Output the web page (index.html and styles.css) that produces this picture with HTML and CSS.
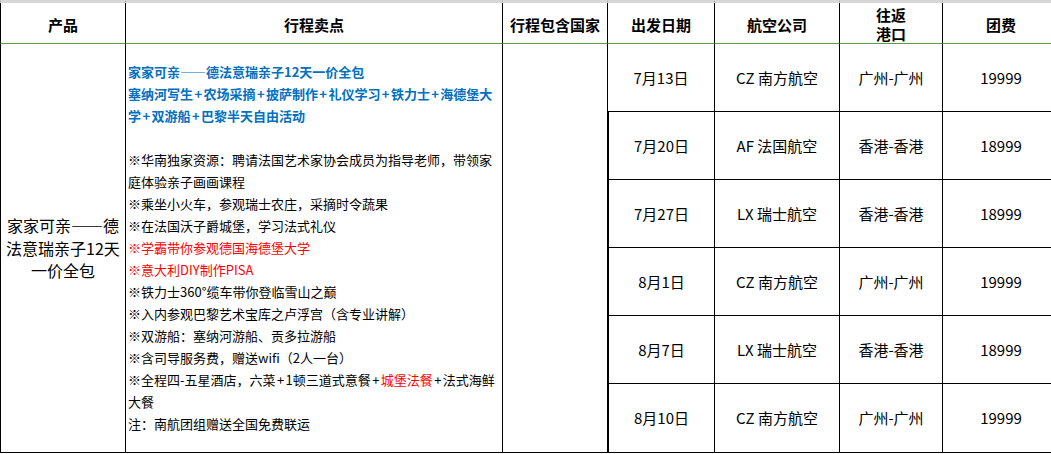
FILE: index.html
```html
<!DOCTYPE html>
<html lang="zh-CN">
<head>
<meta charset="utf-8">
<title>行程</title>
<link rel="stylesheet" href="styles.css">
</head>
<body>
<table class="sheet">
  <colgroup>
    <col class="c-prod">
    <col class="c-sell">
    <col class="c-country">
    <col class="c-date">
    <col class="c-air">
    <col class="c-port">
    <col class="c-fee">
  </colgroup>
  <thead>
    <tr class="band">
      <td></td><td></td><td></td><td></td><td></td><td></td><td></td>
    </tr>
    <tr class="head">
      <th>产品</th>
      <th>行程卖点</th>
      <th>行程包含国家</th>
      <th>出发日期</th>
      <th>航空公司</th>
      <th>往返<br>港口</th>
      <th>团费</th>
    </tr>
  </thead>
  <tbody>
    <tr class="row">
      <td rowspan="6" class="prod">家家可亲——德<br>法意瑞亲子12天<br>一价全包</td>
      <td rowspan="6" class="sell">
        <div class="blue">家家可亲——德法意瑞亲子12天一价全包</div>
        <div class="blue">塞纳河写生<span class="plus">+</span>农场采摘<span class="plus">+</span>披萨制作<span class="plus">+</span>礼仪学习<span class="plus">+</span>铁力士<span class="plus">+</span>海德堡大<br>学<span class="plus">+</span>双游船<span class="plus">+</span>巴黎半天自由活动</div>
        <div class="blank">&nbsp;</div>
        <div>※华南独家资源：聘请法国艺术家协会成员为指导老师，带领家<br>庭体验亲子画画课程</div>
        <div>※乘坐小火车，参观瑞士农庄，采摘时令蔬果</div>
        <div>※在法国沃子爵城堡，学习法式礼仪</div>
        <div class="red">※学霸带你参观德国海德堡大学</div>
        <div class="red">※意大利DIY制作PISA</div>
        <div>※铁力士360°缆车带你登临雪山之巅</div>
        <div>※入内参观巴黎艺术宝库之卢浮宫（含专业讲解）</div>
        <div>※双游船：塞纳河游船、贡多拉游船</div>
        <div>※含司导服务费，赠送wifi（2人一台）</div>
        <div>※全程四-五星酒店，六菜<span class="plus">+</span>1顿三道式意餐<span class="plus">+</span><span class="red">城堡法餐</span><span class="plus">+</span>法式海鲜<br>大餐</div>
        <div>注：南航团组赠送全国免费联运</div>
      </td>
      <td rowspan="6" class="country"></td>
      <td>7月13日</td>
      <td>CZ 南方航空</td>
      <td>广州-广州</td>
      <td>19999</td>
    </tr>
    <tr class="row">
      <td>7月20日</td>
      <td>AF 法国航空</td>
      <td>香港-香港</td>
      <td>18999</td>
    </tr>
    <tr class="row">
      <td>7月27日</td>
      <td>LX 瑞士航空</td>
      <td>香港-香港</td>
      <td>18999</td>
    </tr>
    <tr class="row">
      <td>8月1日</td>
      <td>CZ 南方航空</td>
      <td>广州-广州</td>
      <td>19999</td>
    </tr>
    <tr class="row">
      <td>8月7日</td>
      <td>LX 瑞士航空</td>
      <td>香港-香港</td>
      <td>18999</td>
    </tr>
    <tr class="row last">
      <td>8月10日</td>
      <td>CZ 南方航空</td>
      <td>广州-广州</td>
      <td>19999</td>
    </tr>
  </tbody>
</table>
</body>
</html>
```

FILE: styles.css
```css
html, body {
  margin: 0;
  padding: 0;
  background: #ffffff;
  overflow: hidden;
}

body {
  font-family: "Noto Sans CJK SC", "Noto Sans", sans-serif;
  color: #000000;
}

.sheet {
  border-collapse: separate;
  border-spacing: 0;
  table-layout: fixed;
  width: 1060px;
}

.c-prod { width: 126px; }
.c-sell { width: 377px; }
.c-country { width: 105px; }
.c-date { width: 107px; }
.c-air { width: 125px; }
.c-port { width: 103px; }
.c-fee { width: 117px; }

.sheet td,
.sheet th {
  padding: 0;
  border-right: 1px solid #000000;
  border-bottom: 1px solid #000000;
  vertical-align: middle;
  text-align: center;
}

.sheet tr > :first-child {
  border-left: 1px solid #000000;
}

.band td {
  height: 3px;
  background: #d6d6d6;
  border-right: 1px solid #bdbdbd;
  border-bottom: none;
}

.band td:first-child {
  border-left: 1px solid #bdbdbd;
}

.head th {
  height: 38px;
  padding-top: 2px;
  font-size: 15px;
  font-weight: bold;
  line-height: 19px;
  border-bottom: 1px solid #5a9e46;
}

.row td {
  height: 67px;
  font-size: 15px;
  line-height: 20px;
}

.row.last td {
  height: 68px;
}

.prod {
  font-size: 16px !important;
  line-height: 22.5px !important;
}

.sell {
  text-align: left !important;
  padding-left: 2px !important;
  font-size: 13px !important;
  line-height: 22px !important;
  white-space: nowrap;
}

.plus {
  margin: 0 1.4px;
}

.blue {
  color: #0070c0;
  font-weight: bold;
}

.red {
  color: #ff0000;
}
```
